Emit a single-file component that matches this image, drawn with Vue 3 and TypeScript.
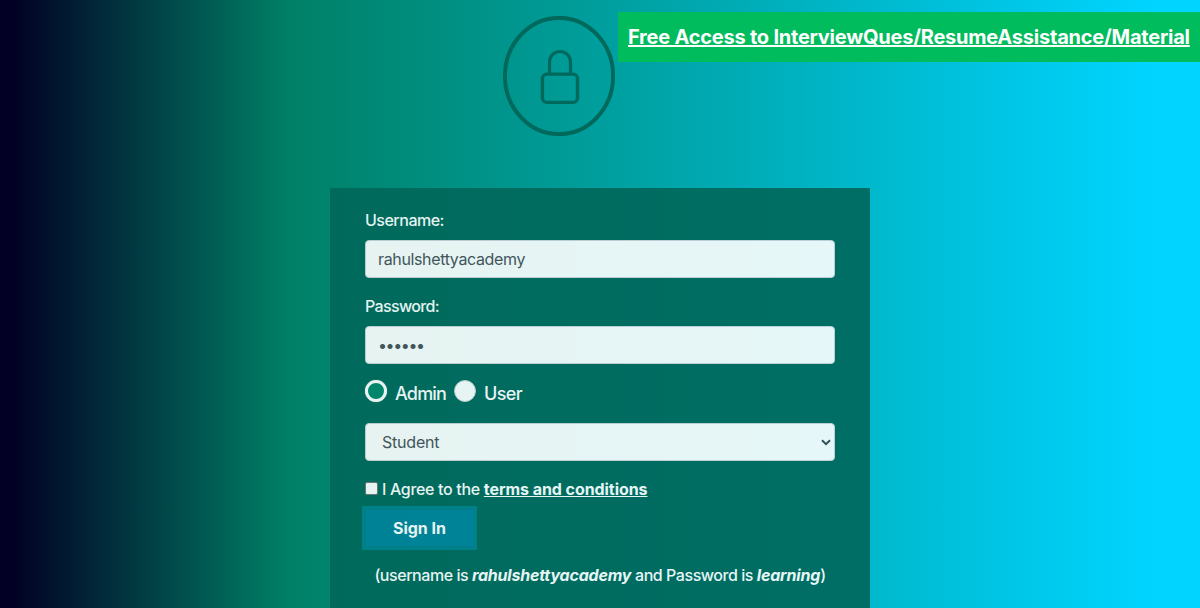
<script setup lang="ts">
import { ref } from 'vue'

const username = ref('rahulshettyacademy')
const password = ref('••••••')
const role = ref('Student')
</script>

<template>
  <main class="page">
    <a class="banner">Free Access to InterviewQues/ResumeAssistance/Material</a>
    <svg class="lock" width="112" height="120" viewBox="0 0 112 120" fill="none">
      <ellipse cx="56" cy="60" rx="54.1" ry="58.1" stroke-width="4" />
      <rect x="39.4" y="58.1" width="35.1" height="28.3" rx="4.5" stroke-width="3.4" />
      <path d="M46.500 58V46.500c0-6.600 4.500-11 10.500-11S67.500 39.900 67.500 46.500V58" stroke-width="3.2" />
    </svg>
    <form class="panel" @submit.prevent>
      <label class="label"><span class="user-label">Username:</span></label>
      <div class="field"><span class="username">{{ username }}</span></div>
      <label class="label second"><span class="pass-label">Password:</span></label>
      <div class="field"><span class="dots">{{ password }}</span></div>
      <div class="roles">
        <span class="radio checked"></span><span class="admin">Admin</span>
        <span class="radio"></span><span class="user">User</span>
      </div>
      <div class="field select">
        <span class="student">{{ role }}</span>
        <svg class="arrow" width="10" height="7" viewBox="0 0 10 7" fill="none">
          <path d="M1 1.200 5 5.200 9 1.200" stroke="#37474f" stroke-width="2" />
        </svg>
      </div>
      <div class="agree">
        <span class="box"></span><span class="agree-text">I Agree to the</span>
        <a class="terms">terms and conditions</a>
      </div>
      <button class="sign"><span>Sign In</span></button>
      <p class="hint">(username is <b><i>rahulshettyacademy</i></b> and Password is <b><i>learning</i></b>)</p>
    </form>
  </main>
</template>

<style>
body { margin: 0; overflow: hidden; }
</style>

<style scoped>
.page {
  position: relative;
  box-sizing: border-box;
  width: 1200px;
  height: 608px;
  padding-top: 16px;
  overflow: hidden;
  background: linear-gradient(90deg, #020024 1%, #008066 24%, #00d4ff 96%);
  font-family: Inter, "Liberation Sans", sans-serif;
  font-size: 16px;
  line-height: 24px;
}
.page span, .page a { white-space: nowrap; }
.banner {
  position: absolute;
  top: 12px;
  right: 0;
  box-sizing: border-box;
  width: 582px;
  height: 50px;
  padding: 10px;
  background: #00bc5c;
  color: #fff;
  font-size: 20px;
  font-weight: 700;
  line-height: 30px;
  letter-spacing: -0.225px;
  text-decoration: underline;
}
.lock { display: block; margin-left: 503px; stroke: #00695c; }
.panel {
  box-sizing: border-box;
  width: 540px;
  height: 430px;
  margin: 52px auto 0;
  padding: 20px 35px;
  background: #00675a;
  color: #fff;
  opacity: 0.9;
}
.label { display: block; height: 24px; margin-bottom: 8px; }
.second { margin-top: 16px; }
.user-label { font-weight: 500; letter-spacing: -0.5px; }
.pass-label { font-weight: 500; letter-spacing: -0.65px; }
.field {
  display: flex;
  align-items: center;
  box-sizing: border-box;
  height: 38px;
  padding: 0 12px;
  border: 1px solid #ced4da;
  border-radius: 4px;
  background: #fff;
  color: #495057;
}
.username { letter-spacing: -0.36px; }
.dots { letter-spacing: -1.4px; }
.roles { display: flex; height: 59px; font-size: 18px; line-height: 59px; }
.radio {
  box-sizing: border-box;
  width: 22px;
  height: 22px;
  margin-top: 16px;
  border-radius: 50%;
  background: #fff;
  border: 1px solid #cfd4d4;
}
.checked { border: 3px solid #fff; background: #00866b; box-shadow: 0 0 1px #bbb; }
.admin { width: 51px; margin: 0 8px; font-weight: 500; letter-spacing: -0.8px; }
.user { margin-left: 8px; font-weight: 500; letter-spacing: -0.6px; }
.select { justify-content: space-between; padding: 0 3px 0 16px; }
.student { letter-spacing: -0.2px; }
.agree { display: flex; align-items: center; height: 24px; margin-top: 16px; }
.box {
  box-sizing: border-box;
  width: 13px;
  height: 13px;
  margin: -2px 4px 0 0;
  border: 1px solid #767676;
  border-radius: 2px;
  background: #fff;
}
.agree-text { margin-right: 4px; font-weight: 500; letter-spacing: -0.33px; }
.terms { font-weight: 700; text-decoration: underline; letter-spacing: -0.06px; }
.sign {
  display: block;
  box-sizing: border-box;
  width: 109px;
  height: 38px;
  margin: 8px 0 0;
  padding: 0;
  border: 1px solid #007c8f;
  background: #00829a;
  box-shadow: 0 0 0 3px #00808a;
  color: #fff;
  font: 700 16px/24px Inter, "Liberation Sans", sans-serif;
  letter-spacing: 0;
}
.hint { margin: 16px -10px 0; text-align: center; white-space: nowrap; font-weight: 500; letter-spacing: -0.45px; }
.hint b { font-weight: 700; letter-spacing: -0.2px; }
</style>
